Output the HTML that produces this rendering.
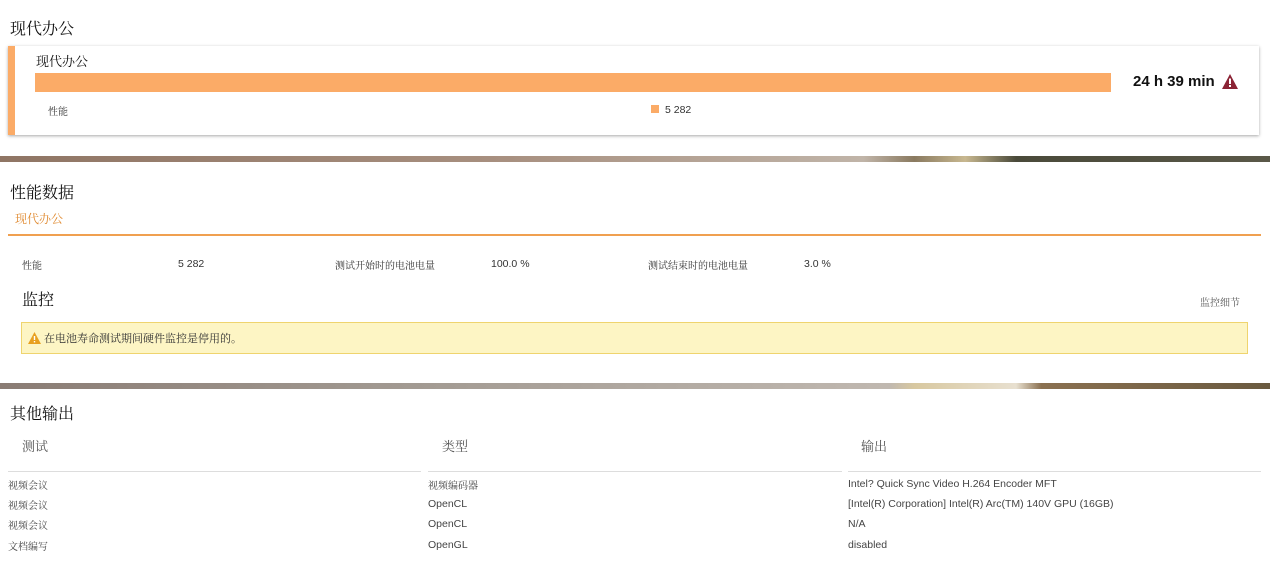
<!DOCTYPE html>
<html><head><meta charset="utf-8"><style>
*{margin:0;padding:0;box-sizing:border-box}
body{width:1270px;height:563px;background:#fff;position:relative;overflow:hidden;font-family:"Liberation Sans","Noto Serif CJK SC",serif;color:#222}
.a{position:absolute;white-space:nowrap}
.sans{font-family:"Liberation Sans","Noto Sans CJK SC",sans-serif}
.h{font-size:16px;color:#111}
.s{font-size:10px;color:#333}
.g{font-size:10px;color:#444}
.l{font-size:10.5px}
</style></head><body>
<div class="a h" style="left:10px;top:16px">现代办公</div>
<div class="a" style="left:8px;top:46px;width:1251px;height:89px;background:#fff;border-left:7px solid #fbab67;box-shadow:0 1px 3px rgba(0,0,0,.35)"></div>
<div class="a" style="left:36px;top:51px;font-size:13px;color:#111">现代办公</div>
<div class="a" style="left:35px;top:73px;width:1076px;height:19px;background:#fbab67"></div>
<div class="a s" style="left:48px;top:103px">性能</div>
<div class="a" style="left:651px;top:105px;width:8px;height:8px;background:#fbab67"></div>
<div class="a sans s l" style="left:665px;top:104px">5 282</div>
<div class="a sans" style="left:1133px;top:73px;font-size:15px;font-weight:bold;color:#111">24 h 39 min</div>
<svg class="a" style="left:1222px;top:74px" width="16" height="15" viewBox="0 0 16 15"><path d="M8 0L16 15H0Z" fill="#8b2335"/><rect x="7" y="4.5" width="2" height="5.5" fill="#fff"/><rect x="7" y="11" width="2" height="2" fill="#fff"/></svg>
<div class="a" style="left:0;top:156px;width:1270px;height:6px;background:linear-gradient(90deg,#8f7564,#a89080 40%,#c0b4a8 68%,#8a7a60 72%,#c8b890 76%,#4a4a3a 80%,#5a5848 100%)"></div>
<div class="a h" style="left:10px;top:180px">性能数据</div>
<div class="a" style="left:15px;top:210px;font-size:12px;color:#e08a30">现代办公</div>
<div class="a" style="left:8px;top:234px;width:1253px;height:2px;background:#f0a050"></div>
<div class="a s" style="left:22px;top:257px">性能</div>
<div class="a sans s l" style="left:178px;top:258px">5 282</div>
<div class="a s" style="left:335px;top:257px">测试开始时的电池电量</div>
<div class="a sans s l" style="left:491px;top:258px">100.0 %</div>
<div class="a s" style="left:648px;top:257px">测试结束时的电池电量</div>
<div class="a sans s l" style="left:804px;top:258px">3.0 %</div>
<div class="a h" style="left:22px;top:287px">监控</div>
<div class="a" style="left:1200px;top:294px;font-size:10px;color:#555">监控细节</div>
<div class="a" style="left:21px;top:322px;width:1227px;height:32px;background:#fdf5c4;border:1px solid #efd46e"></div>
<svg class="a" style="left:28px;top:332px" width="13" height="12" viewBox="0 0 13 12"><path d="M6.5 0L13 12H0Z" fill="#e8a020"/><rect x="5.8" y="4" width="1.4" height="4" fill="#fff"/><rect x="5.8" y="9" width="1.4" height="1.4" fill="#fff"/></svg>
<div class="a" style="left:44px;top:330px;font-size:11px;color:#333">在电池寿命测试期间硬件监控是停用的。</div>
<div class="a" style="left:0;top:383px;width:1270px;height:6px;background:linear-gradient(90deg,#8a7c74,#a09890 30%,#c0b8b0 70%,#d8c8a0 72%,#e8e0d0 80%,#8a7050 82%,#6a5a40 100%)"></div>
<div class="a h" style="left:10px;top:401px">其他输出</div>
<div class="a" style="left:22px;top:436px;font-size:13px;color:#555">测试</div>
<div class="a" style="left:442px;top:436px;font-size:13px;color:#555">类型</div>
<div class="a" style="left:861px;top:436px;font-size:13px;color:#555">输出</div>
<div class="a" style="left:8px;top:471px;width:413px;height:1px;background:#ddd"></div>
<div class="a" style="left:428px;top:471px;width:414px;height:1px;background:#ddd"></div>
<div class="a" style="left:848px;top:471px;width:413px;height:1px;background:#ddd"></div>
<div class="a g" style="left:8px;top:477px">视频会议</div>
<div class="a g" style="left:8px;top:497px">视频会议</div>
<div class="a g" style="left:8px;top:517px">视频会议</div>
<div class="a g" style="left:8px;top:538px">文档编写</div>
<div class="a g" style="left:428px;top:477px">视频编码器</div>
<div class="a sans g l" style="left:428px;top:498px">OpenCL</div>
<div class="a sans g l" style="left:428px;top:518px">OpenCL</div>
<div class="a sans g l" style="left:428px;top:539px">OpenGL</div>
<div class="a sans g l" style="left:848px;top:478px">Intel? Quick Sync Video H.264 Encoder MFT</div>
<div class="a sans g l" style="left:848px;top:498px">[Intel(R) Corporation] Intel(R) Arc(TM) 140V GPU (16GB)</div>
<div class="a sans g l" style="left:848px;top:518px">N/A</div>
<div class="a sans g l" style="left:848px;top:539px">disabled</div>
</body></html>
